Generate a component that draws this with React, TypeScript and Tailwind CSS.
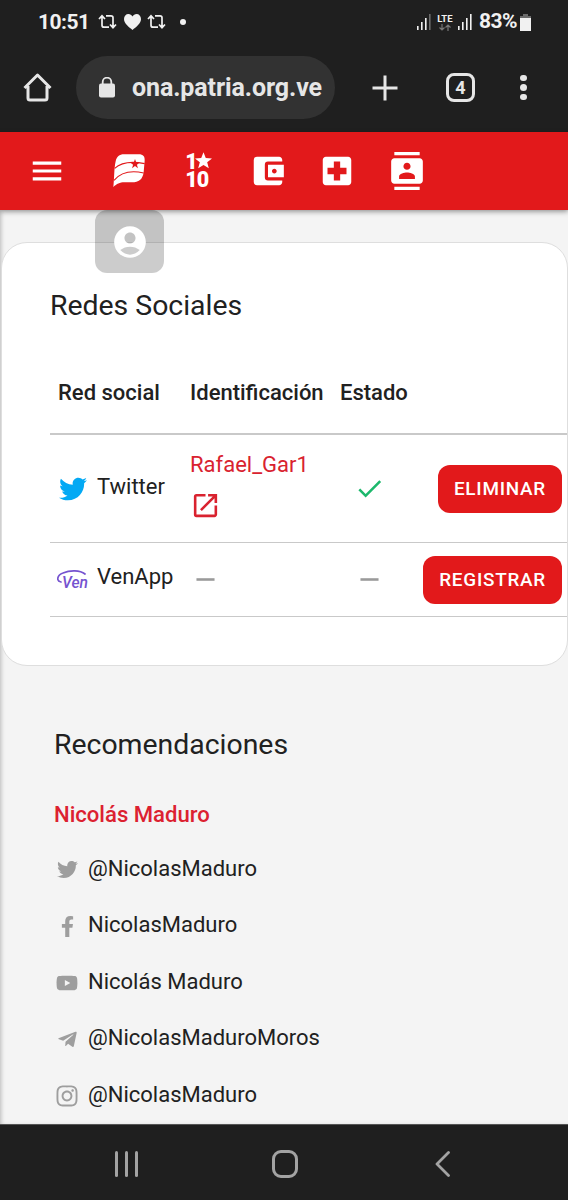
import * as React from 'react';
import {
  MdAccountBalanceWallet,
  MdAccountCircle,
  MdCheck,
  MdContacts,
  MdLocalHospital,
  MdMenu,
  MdOpenInNew,
  MdRemove,
} from 'react-icons/md';
import { FaFacebookF, FaInstagram, FaTelegramPlane, FaTwitter, FaYoutube } from 'react-icons/fa';

const accounts = [
  { icon: 'twitter', label: '@NicolasMaduro' },
  { icon: 'facebook', label: 'NicolasMaduro' },
  { icon: 'youtube', label: 'Nicolás Maduro' },
  { icon: 'telegram', label: '@NicolasMaduroMoros' },
  { icon: 'instagram', label: '@NicolasMaduro' },
];

function RetweetIcon() {
  return (
    <svg width="19" height="16" viewBox="0 0 19 16" fill="none" stroke="#f1f1f1" strokeWidth="1.7">
      <path d="M1 5l3-3.2L7 5M4 2.2v9q0 2 2 2h5M8 1.8h5q2 0 2 2v9M12 10.5l3 3.2 3-3.2" />
    </svg>
  );
}

function Signal({ weak }: { weak?: boolean }) {
  return (
    <svg width="15" height="16" viewBox="0 0 15 16" fill="#f1f1f1">
      <rect x="0" y="12" width="1.6" height="4" />
      <rect x="4" y="8" width="1.6" height="8" />
      <rect x="8" y="4" width="1.6" height="12" />
      <rect x="12" y="0" width="1.6" height="16" fill={weak ? '#6b6b6b' : '#f1f1f1'} />
    </svg>
  );
}

function StatusBar() {
  return (
    <div className="flex h-[44px] items-center pr-[37px] pl-[38px] text-[#f1f1f1]">
      <span className="mt-[2px] w-[60px] text-[21px] font-bold tracking-[-0.5px]">10:51</span>
      <RetweetIcon />
      <svg className="ml-[7px]" width="17" height="16" viewBox="0 0 17 16" fill="#f1f1f1">
        <path d="M8.5 16C5 13 0 9.5 0 5 0 2 2 0 4.4 0 6.2 0 7.6 1 8.5 2.4 9.4 1 10.8 0 12.6 0 15 0 17 2 17 5c0 4.500-5 8-8.500 11z" />
      </svg>
      <div className="ml-[6px]">
        <RetweetIcon />
      </div>
      <span className="ml-[14px] size-[6px] rounded-full bg-[#f1f1f1]" />
      <div className="ml-auto flex items-center">
        <Signal weak />
        <div className="ml-[4px] flex w-[18px] flex-col items-center">
          <span className="text-[9.500px] leading-[9px] font-bold">LTE</span>
          <svg className="mt-px" width="12" height="7" viewBox="0 0 12 7" fill="none" stroke="#777" strokeWidth="1.2">
            <path d="M3 0v6M.5 3.500L3 6l2.500-2.500M9 7V1M6.500 3.500L9 1l2.500 2.500" />
          </svg>
        </div>
        <div className="ml-[4px]">
          <Signal />
        </div>
        <span className="ml-[6px] text-[21px] font-bold tracking-[-0.5px]">83%</span>
        <svg className="ml-[3px]" width="11" height="17" viewBox="0 0 11 17">
          <path d="M3 0h5v2h3v3H0V2h3z" fill="#6b6b6b" />
          <path d="M0 4h11v13H0z" fill="#f1f1f1" />
        </svg>
      </div>
    </div>
  );
}

function BrowserBar() {
  return (
    <div className="flex h-[88px] items-center pb-[1px] pl-[23px]">
      <svg width="29" height="29" viewBox="0 0 29 29" fill="none" stroke="#e6e6e6" strokeWidth="3" strokeLinejoin="round">
        <path d="M1.500 15L14.500 2l13 13M5 13v12q0 2 2 2h15q2 0 2-2V13" />
      </svg>
      <div className="ml-[24px] flex h-[63px] w-[259px] items-center rounded-full bg-[#323232] pl-[23px]">
        <svg width="16" height="21" viewBox="0 0 16 21">
          <path d="M3.700 8V5a4.300 4.300 0 0 1 8.600 0v3" fill="none" stroke="#e6e6e6" strokeWidth="1.800" />
          <rect y="6.500" width="16" height="14" rx="2" fill="#e6e6e6" />
        </svg>
        <span className="ml-[17px] text-[25px] font-bold tracking-[-0.1px] text-[#e6e6e6]">ona.patria.org.ve</span>
      </div>
      <svg className="ml-[37px]" width="26" height="26" viewBox="0 0 26 26" stroke="#e6e6e6" strokeWidth="3">
        <path d="M13 .5v25M.5 13h25" />
      </svg>
      <div className="ml-[48px] flex size-[29px] items-center justify-center rounded-[8px] border-3 border-[#e6e6e6] text-[18px] font-bold text-[#e6e6e6]">
        4
      </div>
      <div className="ml-[45px] flex flex-col gap-[3px]">
        <span className="size-[6.500px] rounded-full bg-[#e6e6e6]" />
        <span className="size-[6.500px] rounded-full bg-[#e6e6e6]" />
        <span className="size-[6.500px] rounded-full bg-[#e6e6e6]" />
      </div>
    </div>
  );
}

function FlagIcon() {
  return (
    <svg width="32" height="33" viewBox="342 86 94 99">
      <path
        d="M342 185C345 160 344 128 349 108C352 94 360 87 374 87H418C432 87 437 94 436 106L433 140C430 163 418 171 398 171H376C360 171 353 176 342 185Z"
        fill="#fff"
      />
      <path d="M346 129C370 107 405 109 436 115M344 165C367 138 402 136 433 143" fill="none" stroke="#e2191b" strokeWidth="3.500" />
      <path d="M407 101l3.500 10 11 .3-8.700 6.600 3 10.500-8.800-6.200-8.800 6.200 3-10.500-8.700-6.600 11-.3z" fill="#e2191b" />
    </svg>
  );
}

// 1x10 badge: a star takes the place of the sign
function OneByTen() {
  return (
    <div className="relative w-[26px] text-[21.500px] leading-[17.500px] font-black tracking-[-1px] text-white">
      1<br />
      10
      <svg className="absolute -top-px left-[10px]" width="17" height="17" viewBox="0 0 24 24" fill="#fff">
        <path d="M12 .5l3.200 8 8.800.5-6.800 5.500 2.300 8.500L12 18.200 4.500 23l2.300-8.500L0 9l8.800-.5z" />
      </svg>
    </div>
  );
}

function AppHeader() {
  return (
    <header className="relative z-10 flex h-[78px] items-center bg-[#e2191b] pl-[28px] text-white shadow-[0_2px_5px_rgba(0,0,0,0.35)]">
      <MdMenu size={38} />
      <nav className="ml-[28px] grid grid-cols-[repeat(5,69.500px)] place-items-center pb-px">
        <FlagIcon />
        <OneByTen />
        <MdAccountBalanceWallet size={38} />
        <MdLocalHospital size={38} />
        <MdContacts size={38} />
      </nav>
      <div className="absolute top-[78px] left-[95px] flex h-[63px] w-[69px] items-center justify-center rounded-[12px] bg-black/20">
        <MdAccountCircle size={38} />
      </div>
    </header>
  );
}

function VenLogo() {
  return (
    <svg width="32" height="22" viewBox="0 0 32 22" fill="none">
      <path d="M4 13C-1 12 0 6 6 4C13 1 23 1 28 5" stroke="#7553d0" strokeWidth="1.700" strokeLinecap="round" />
      <text x="5" y="18.500" fill="#7553d0" fontSize="16" fontWeight="500" fontStyle="italic" textLength="26" lengthAdjust="spacingAndGlyphs">
        Ven
      </text>
    </svg>
  );
}

function ActionButton({ children }: { children: React.ReactNode }) {
  return (
    <button className="h-[48px] rounded-[12px] bg-[#e2191b] px-[16px] text-[18.900px] font-medium tracking-[0.75px] text-white">
      {children}
    </button>
  );
}

function SocialTable() {
  const cols = 'grid grid-cols-[132px_150px_75px_1fr] items-center border-[#c9c9c9]';
  return (
    <div className="mt-[29px] text-[22px] leading-[32px]">
      <div className={`${cols} h-[82px] border-b-2 font-medium`}>
        <span className="pl-[8px]">Red social</span>
        <span className="pl-[8px]">Identificación</span>
        <span className="pl-[8px]">Estado</span>
      </div>
      <div className={`${cols} h-[108px] border-b-[1.500px]`}>
        <div className="flex items-center pl-[9px]">
          <FaTwitter size={28} color="#03a9f4" />
          <span className="ml-[10px] pb-[4px]">Twitter</span>
        </div>
        <div className="pb-[8px] pl-[8px] text-[#d9222f]">
          <div>Rafael_Gar1</div>
          <MdOpenInNew className="mt-[9px]" size={31} />
        </div>
        <MdCheck className="justify-self-center" size={31} color="#1cb86c" />
        <div className="justify-self-end pr-[5px]">
          <ActionButton>ELIMINAR</ActionButton>
        </div>
      </div>
      <div className={`${cols} h-[74px] border-b-[1.500px]`}>
        <div className="flex items-center pl-[7px]">
          <VenLogo />
          <span className="ml-[8px] pb-[5px]">VenApp</span>
        </div>
        <MdRemove className="ml-[8px]" size={31} color="#9a9a9a" />
        <MdRemove className="justify-self-center" size={31} color="#9a9a9a" />
        <div className="justify-self-end pr-[5px]">
          <ActionButton>REGISTRAR</ActionButton>
        </div>
      </div>
    </div>
  );
}

function AccountIcon({ name }: { name: string }) {
  if (name === 'twitter') return <FaTwitter size={21} />;
  if (name === 'facebook') return <FaFacebookF size={21} />;
  if (name === 'youtube') return <FaYoutube size={22} />;
  if (name === 'telegram') return <FaTelegramPlane size={21} />;
  return <FaInstagram size={24} />;
}

export default function App() {
  return (
    <div className="flex h-[1200px] w-[568px] flex-col overflow-hidden bg-[#f4f4f4] font-[Roboto,sans-serif] text-[#212121]">
      <div className="shrink-0 bg-[#1f1f1f]">
        <StatusBar />
        <BrowserBar />
      </div>
      <AppHeader />
      <main className="flex-1 pt-[32px] shadow-[inset_3px_0_4px_-2px_rgba(0,0,0,0.25)]">
        <section className="ml-px h-[424px] rounded-[26px] border border-[#dedede] bg-white pt-[45px] pl-[48px]">
          <h2 className="text-[28.400px] leading-[36px]">Redes Sociales</h2>
          <SocialTable />
        </section>
        <section className="pt-[61px] pl-[54px]">
          <h2 className="text-[28.400px] leading-[36px]">Recomendaciones</h2>
          <h3 className="mt-[35px] text-[22.100px] leading-[32px] font-medium text-[#dc2130]">Nicolás Maduro</h3>
          <ul className="mt-[10px] text-[22px]">
            {accounts.map((a) => (
              <li key={a.icon} className="flex h-[56.500px] items-center">
                <span className="mt-[3px] flex w-[26px] justify-center text-[#9e9e9e]">
                  <AccountIcon name={a.icon} />
                </span>
                <span className="ml-[8px]">{a.label}</span>
              </li>
            ))}
          </ul>
        </section>
      </main>
      <div className="grid h-[76px] shrink-0 grid-cols-[252px_65px_251px] items-center justify-items-center border-t border-[#555] bg-[#1f1f1f] pt-[2px]">
        <div className="flex gap-[7px]">
          <span className="h-[26px] w-[3px] rounded-full bg-[#a3a3a3]" />
          <span className="h-[26px] w-[3px] rounded-full bg-[#a3a3a3]" />
          <span className="h-[26px] w-[3px] rounded-full bg-[#a3a3a3]" />
        </div>
        <span className="h-[28px] w-[26px] rounded-[9px] border-3 border-[#a3a3a3]" />
        <svg width="15" height="26" viewBox="0 0 15 26" fill="none" stroke="#a3a3a3" strokeWidth="2.800" strokeLinecap="round" strokeLinejoin="round">
          <path d="M13.500 1.500L2 13l11.500 11.500" />
        </svg>
      </div>
    </div>
  );
}
